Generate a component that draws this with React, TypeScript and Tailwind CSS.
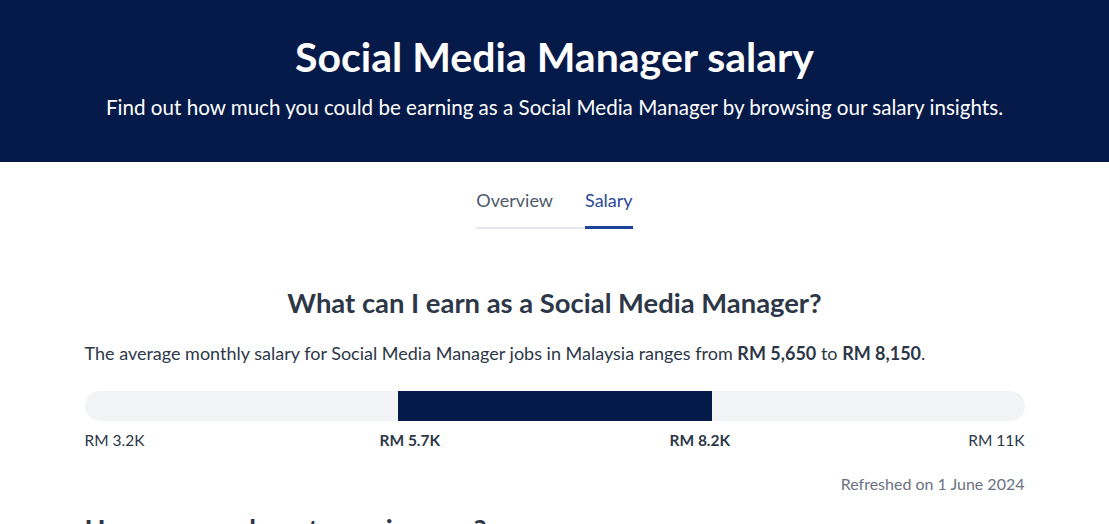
export default function App() {
  const font = { fontFamily: "Lato, 'Noto Sans', sans-serif" }
  return (
    <div className="min-h-screen bg-white" style={font}>
      {/* Hero */}
      <div className="bg-[#061a4a] h-[162px] flex flex-col items-center pt-[32px]">
        <h1 className="text-[41px] leading-[50px] font-bold text-white">Social Media Manager salary</h1>
        <p className="mt-[12px] text-[20.6px] leading-[26px] text-white">
          Find out how much you could be earning as a Social Media Manager by browsing our salary insights.
        </p>
      </div>

      {/* Tabs */}
      <div className="flex justify-center mt-[26px]">
        <div className="flex items-end">
          <div className="pr-8 border-b-2 border-[#e5e7eb] pb-[15px] text-[18px] leading-[24px] text-[#4d586a]">Overview</div>
          <div className="border-b-[3px] border-[#1d4399] pb-[14px] text-[18px] leading-[24px] text-[#2b4a96]">Salary</div>
        </div>
      </div>

      {/* Salary range */}
      <div className="w-[940px] mx-auto">
        <h2 className="mt-[57px] text-center text-[27.4px] leading-[34px] font-bold text-[#2d3748]">
          What can I earn as a Social Media Manager?
        </h2>
        <p className="mt-[21px] text-[18px] leading-[24px] text-[#2d3748]">
          The average monthly salary for Social Media Manager jobs in Malaysia ranges from{" "}
          <span className="font-bold">RM 5,650</span> to <span className="font-bold">RM 8,150</span>.
        </p>

        <div className="mt-[26px] h-[30px] rounded-full bg-[#f2f3f5] flex overflow-hidden">
          <div className="w-[313px]" />
          <div className="w-[314px] bg-[#061a4a]" />
        </div>
        <div className="mt-[9px] grid grid-cols-[295px_290px_1fr_auto] text-[15.5px] leading-[20px] text-[#2d3748]">
          <span>RM 3.2K</span>
          <span className="font-bold">RM 5.7K</span>
          <span className="font-bold">RM 8.2K</span>
          <span>RM 11K</span>
        </div>
        <p className="mt-[24px] text-right text-[16px] leading-[20px] text-[#6b7280]">Refreshed on 1 June 2024</p>

        <h2 className="mt-[18px] text-[27.4px] leading-[34px] font-bold text-[#2d3748]">How can you boost your income?</h2>
      </div>
    </div>
  )
}
